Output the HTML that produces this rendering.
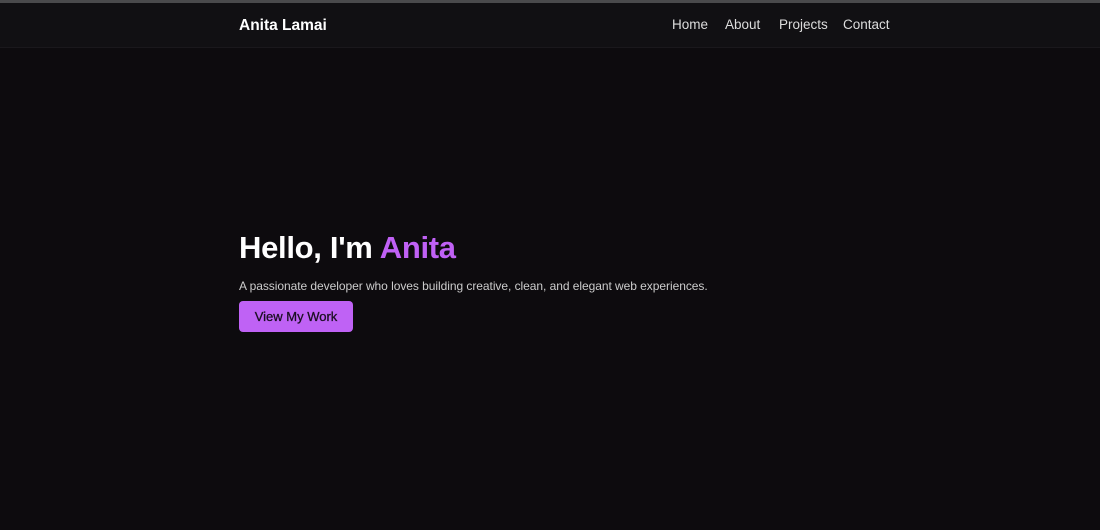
<!DOCTYPE html>
<html><head><style>
*{margin:0;padding:0;box-sizing:border-box}
body{width:1100px;height:530px;background:#0d0b0e;font-family:"Liberation Sans",sans-serif;overflow:hidden;border-top:3px solid #4a4a4c;position:relative}
header{height:45px;background:#111013;border-bottom:1px solid #1a181c;position:relative}
.logo{position:absolute;left:239px;top:14px;color:#fff;font-weight:bold;font-size:15.5px}
nav a{position:absolute;top:14px;color:#ddd;font-size:13.5px;text-decoration:none}
h1{position:absolute;left:239px;top:227px;color:#fff;font-size:31px;font-weight:bold;letter-spacing:-0.3px}
h1 span{color:#c061f5}
p{position:absolute;left:239px;top:276px;color:#ccc;font-size:12px;letter-spacing:-0.05px}
.btn{position:absolute;left:239px;top:298px;width:114px;height:31px;background:#bf62f5;border-radius:4px;color:#1a0f22;font-size:13px;display:flex;align-items:center;justify-content:center;-webkit-text-stroke:0.3px #1a0f22}
</style></head><body>
<header><div class="logo">Anita Lamai</div>
<nav><a style="left:672px">Home</a><a style="left:725px">About</a><a style="left:779px">Projects</a><a style="left:843px">Contact</a></nav></header>
<h1>Hello, I'm <span>Anita</span></h1>
<p>A passionate developer who loves building creative, clean, and elegant web experiences.</p>
<div class="btn">View My Work</div>
</body></html>
